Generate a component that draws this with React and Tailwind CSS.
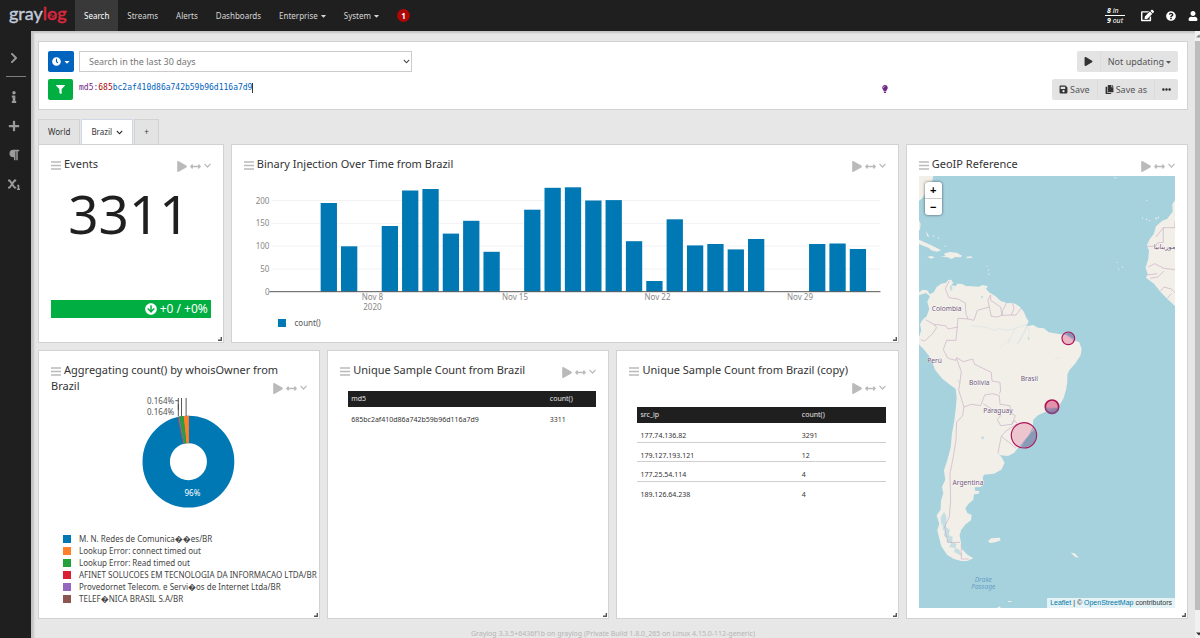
import React from "react";
import {
  FaClock, FaCaretDown, FaFilter, FaPlay, FaSave, FaCopy, FaEllipsisH, FaChevronRight, FaChevronDown,
  FaInfo, FaPlus, FaParagraph, FaSubscript, FaEdit, FaQuestionCircle, FaUser, FaArrowCircleDown,
  FaArrowsAltH, FaLightbulb,
} from "react-icons/fa";

const NAV = [
  { label: "Search", active: true },
  { label: "Streams" },
  { label: "Alerts" },
  { label: "Dashboards" },
  { label: "Enterprise", menu: true },
  { label: "System", menu: true },
];

function Logo() {
  return (
    <a href="#home" aria-label="Graylog" className="flex w-[75px] shrink-0 items-center pl-2">
      <svg viewBox="0 0 64 31" className="h-[31px] w-16" fontFamily="Lato, sans-serif" fontSize="18">
        <text x="1" y="20" fill="#c3cbdb" stroke="#c3cbdb" strokeWidth="0.4">
          gray<tspan fill="#e0273f" stroke="#e0273f">log</tspan>
        </text>
        <path d="M40 15.8h2.4l1-2 1.4 4 1-2.4h1.6" fill="none" stroke="#e0273f" strokeWidth="0.8" />
      </svg>
    </a>
  );
}

function Header() {
  return (
    <header className="flex h-[31px] shrink-0 items-stretch bg-[#1f1f1f] text-[8px] text-[#d6d6d6]">
      <Logo />
      <nav className="flex items-stretch">
        {NAV.map((n) => (
          <a
            key={n.label}
            href={"#" + n.label.toLowerCase()}
            className={"flex items-center gap-[3px] px-[9px] " + (n.active ? "bg-[#393939] text-white" : "")}
          >
            {n.label}
            {n.menu && <FaCaretDown className="h-2 w-[5px]" />}
          </a>
        ))}
      </nav>
      <a href="#notifications" className="flex items-center px-[9px]">
        <span className="flex size-[13px] items-center justify-center rounded-full bg-[#ad0707] font-bold text-white">1</span>
      </a>
      <div className="ml-auto flex items-center gap-3 pr-[2px] text-white">
        <a href="#throughput" className="mr-1 text-[7px] leading-[9px] italic">
          <span className="block border-b border-white px-[2px]"><b>8</b> in</span>
          <span className="block px-[2px]"><b>9</b> out</span>
        </a>
        <a href="#scratchpad" aria-label="Scratchpad"><FaEdit className="size-[13px]" /></a>
        <a href="#help" aria-label="Help"><FaQuestionCircle className="size-[10px]" /></a>
        <a href="#user" aria-label="User"><FaUser className="size-[10px]" /></a>
      </div>
    </header>
  );
}

function SideButton({ label, icon: Icon }) {
  return (
    <button aria-label={label} className="flex h-[29px] w-full items-center justify-center pr-[3px]">
      <Icon className="size-3" />
    </button>
  );
}

function Sidebar() {
  return (
    <aside className="flex w-[31px] shrink-0 flex-col items-center bg-[#1f1f1f] pt-3 text-[#9b9b9b]">
      <SideButton label="Expand" icon={FaChevronRight} />
      <hr className="mt-1 mb-[5px] w-5 border-[#7d7d7d]" />
      <SideButton label="Description" icon={FaInfo} />
      <SideButton label="Create" icon={FaPlus} />
      <SideButton label="Formatting" icon={FaParagraph} />
      <SideButton label="Fields" icon={FaSubscript} />
    </aside>
  );
}

function SearchBar() {
  return (
    <section className="grid grid-cols-[3fr_1fr] gap-y-[7px] border border-[#d2d2d2] bg-white px-[9px] py-[9px]">
      <div className="flex gap-[5px]">
        <button aria-label="Time range type" className="flex h-[21px] w-[26px] items-center justify-center gap-[2px] rounded-[2px] bg-[#0063be] text-white">
          <FaClock className="size-[9px]" />
          <FaCaretDown className="size-2" />
        </button>
        <div className="relative flex w-[333px] text-[#777]">
          <select aria-label="Time range" className="h-[21px] w-full appearance-none border border-[#ccc] bg-white px-[9px] text-[9px]">
            <option>Search in the last 30 days</option>
          </select>
          <FaChevronDown className="pointer-events-none absolute top-[7px] right-[2px] size-[7px] text-[#444]" />
        </div>
      </div>
      <div className="flex justify-end text-[9px] text-[#555]">
        <div className="flex h-[21px] rounded-[2px] bg-[#e3e3e3]">
          <button aria-label="Start updating" className="flex items-center border-r border-[#dcdcdc] px-[7px] text-[#333]"><FaPlay className="size-[9px]" /></button>
          <button className="flex items-center gap-[2px] px-[7px]">Not updating <FaCaretDown className="h-2 w-[5px]" /></button>
        </div>
      </div>
      <div className="flex gap-[6px]">
        <button aria-label="Perform search" className="flex h-[21px] w-[25px] shrink-0 items-center justify-center rounded-[2px] bg-[#00ae42] text-white">
          <FaFilter className="size-[9px]" />
        </button>
        <div className="relative flex-1 font-['DejaVu_Sans_Mono',monospace] text-[8px] leading-[17px]">
          <span aria-hidden="true" className="flex items-center text-[#0063be]">
            <span className="text-[#702785]">md5:</span>
            <span className="text-[#ad0707]">685</span>
            <span>bc2af410d86a742b59b96d116a7d9</span>
            <span className="h-[10px] w-px bg-[#333]" />
          </span>
          <input
            aria-label="Query"
            defaultValue="md5:685bc2af410d86a742b59b96d116a7d9"
            className="absolute inset-0 h-[17px] w-full bg-transparent text-transparent outline-none"
          />
        </div>
        <FaLightbulb className="mt-[6px] mr-[7px] size-2 text-[#702785]" />
      </div>
      <div className="flex justify-end text-[9px] text-[#555]">
        <div className="flex h-[21px] rounded-[2px] bg-[#e3e3e3]">
          <button className="flex items-center gap-[2px] border-r border-[#dcdcdc] px-[7px]"><FaSave className="size-[9px] text-[#333]" />Save</button>
          <button className="flex items-center gap-[2px] border-r border-[#dcdcdc] px-[7px]"><FaCopy className="size-[9px] text-[#333]" />Save as</button>
          <button aria-label="More actions" className="flex items-center px-[7px] text-[#333]"><FaEllipsisH className="size-[9px]" /></button>
        </div>
      </div>
    </section>
  );
}

function Tabs() {
  return (
    <div role="tablist" className="mt-[9px] flex gap-px text-[8px] text-[#333]">
      <button role="tab" aria-selected="false" className="h-[25px] border border-b-0 border-[#d2d2d2] bg-[#e3e3e3] px-[9px]">World</button>
      <button role="tab" aria-selected="true" className="flex h-[25px] items-center gap-1 border border-b-0 border-[#cfd9e6] bg-white px-[9px]">
        Brazil <FaChevronDown className="size-[7px] text-[#1f1f1f]" />
      </button>
      <button aria-label="Add page" className="h-[25px] border border-b-0 border-[#d2d2d2] bg-[#e3e3e3] px-[9px]">+</button>
    </div>
  );
}

function Widget({ title, className, children }) {
  return (
    <section className={"relative flex flex-col border border-[#d2d2d2] bg-white px-3 pt-[11px] " + className}>
      <header className="flow-root text-[11px] leading-4 text-[#bababa]">
        <svg viewBox="0 0 10 9" className="mr-[3px] inline h-[9px] w-[10px] align-middle" stroke="currentColor" strokeWidth="1.4">
          <path d="M0 1h10M0 4.5h10M0 8h10" />
        </svg>
        <h3 className="inline text-[#333]">{title}</h3>
        <span className="float-right flex h-4 items-end gap-[3px] pl-2">
          <button aria-label="Replay" className="flex"><FaPlay className="h-[11px] w-[10px]" /></button>
          <button aria-label="Stretch" className="flex"><FaArrowsAltH className="size-[11px]" /></button>
          <button aria-label="Widget menu" className="flex pb-1">
            <svg viewBox="0 0 7 5" className="h-[5px] w-[7px]" fill="none" stroke="currentColor" strokeWidth="1.2"><path d="M.5.8 3.5 4l3-3.2" /></svg>
          </button>
        </span>
      </header>
      {children}
      <svg viewBox="0 0 4 4" className="absolute right-[1px] bottom-[1px] size-1 text-[#555]" fill="none" stroke="currentColor" strokeWidth="1.4">
        <path d="M0 3.3h3.3V0" />
      </svg>
    </section>
  );
}

const BARS = [
  [0, 203], [1, 246.3], [3, 226], [4, 190.5], [5, 189], [6, 233.6], [7, 220.8], [8, 251.8], [10, 209.7],
  [11, 187.8], [12, 187.3], [13, 200.5], [14, 200.1], [15, 241.2], [16, 281], [17, 219.3], [18, 245.4],
  [19, 244], [20, 249.4], [21, 239], [24, 244], [25, 243.5], [26, 249],
];

function BarChart() {
  return (
    <svg viewBox="244 176 641 156" className="mt-1 h-[156px] w-full" fontFamily="Noto Sans, sans-serif" fontSize="8" fill="#888">
      {[[200, 200.5], [150, 223.3], [100, 246.1], [50, 269]].map(([v, y]) => (
        <g key={v}>
          <path d={`M271 ${y}H880`} stroke="#f2f2f2" />
          <text x="269" y={y + 3} textAnchor="end">{v}</text>
        </g>
      ))}
      <text x="269" y="295" textAnchor="end">0</text>
      {BARS.map(([i, y]) => (
        <rect key={i} x={320.2 + i * 20.35} y={y} width="16.3" height={291.7 - y} fill="#0078b3" />
      ))}
      <path d="M269 291.7H880" stroke="#555" />
      <g textAnchor="middle">
        <text x="372" y="300">Nov 8</text>
        <text x="372" y="310">2020</text>
        <text x="514.5" y="300">Nov 15</text>
        <text x="657" y="300">Nov 22</text>
        <text x="799.5" y="300">Nov 29</text>
      </g>
      <rect x="277.5" y="319" width="8" height="8" fill="#0078b3" />
      <text x="294" y="326" fill="#555">count()</text>
    </svg>
  );
}

const OWNERS = [
  ["bg-[#0078b3]", "M. N. Redes de Comunica\uFFFD\uFFFDes/BR"],
  ["bg-[#ff7f2a]", "Lookup Error: connect timed out"],
  ["bg-[#26a03a]", "Lookup Error: Read timed out"],
  ["bg-[#dc1e34]", "AFINET SOLUCOES EM TECNOLOGIA DA INFORMACAO LTDA/BR"],
  ["bg-[#9467bd]", "Provedornet Telecom. e Servi\uFFFDos de Internet Ltda/BR"],
  ["bg-[#8c5650]", "TELEF\uFFFDNICA BRASIL S.A/BR"],
];

function Donut() {
  return (
    <>
      <svg viewBox="51 396 256 116" className="mt-[2px] h-[116px] w-full" fontFamily="Noto Sans, sans-serif" fontSize="8">
        <circle cx="188.3" cy="461.7" r="32.2" fill="none" stroke="#0078b3" strokeWidth="27.4" />
        <path d="M188.8 415.7v27.5h-2.6l-3-27.2z" fill="#ff7f2a" />
        <path d="M183.4 416l2.8 27.2-2.2.2-4.6-27z" fill="#26a03a" />
        <path d="M179.4 416.4l4.6 27-.8.2-5.2-26.9z" fill="#8f6f9c" />
        <path d="M178 416.7l5.2 26.9-.6.1-5.4-26.8z" fill="#8c5650" />
        <path d="M178.2 398v18M181.4 398v18M186 398v18M178.2 400.7h-3M178.2 404v6" fill="none" stroke="#444" strokeWidth="0.9" />
        <g fill="#555" textAnchor="end">
          <text x="174" y="404">0.164%</text>
          <text x="174" y="415">0.164%</text>
        </g>
        <text x="192.3" y="496" textAnchor="middle" fill="#fff">96%</text>
      </svg>
      <ul className="mt-[21px] pl-3 text-[8px] leading-[12px] whitespace-nowrap text-[#444]">
        {OWNERS.map(([c, t]) => (
          <li key={t} className="flex items-center gap-2"><i className={"size-2 shrink-0 " + c} />{t}</li>
        ))}
      </ul>
    </>
  );
}

function DataTable({ head, rows, first }) {
  return (
    <table className="mt-[13px] ml-2 table-fixed border-collapse text-left text-[7px] text-[#333]">
      <thead className="bg-[#1f1f1f] text-[#e3e3e3]">
        <tr className="h-4">
          <th className={"px-[3px] font-normal " + first}>{head[0]}</th>
          <th className="px-[3px] font-normal">{head[1]}</th>
        </tr>
      </thead>
      <tbody>
        {rows.map((r) => (
          <tr key={r[0]} className="h-[19px] border-b border-[#cfcfcf] last:border-b-0">
            <td className="px-[3px] pt-2">{r[0]}</td>
            <td className="px-[3px] pt-2">{r[1]}</td>
          </tr>
        ))}
      </tbody>
    </table>
  );
}

function Map() {
  return (
    <div className="relative mt-1 mb-[10px] min-h-0 flex-1 overflow-hidden bg-[#a6d2de]">
      <svg viewBox="55 107 769 1296" preserveAspectRatio="xMidYMid slice" className="block h-full w-full">
        <g fill="#f2efe9">
          <path d="M55 456L66 448 80 450 88 462 100 455 108 440 122 430 135 428 144 419 152 418 158 428 152 434 165 438 170 430 185 431 196 437 212 438 235 439 246 434 262 438 256 445 265 456 285 468 300 482 318 488 340 489 358 499 370 515 377 532 384 543 378 558 398 554 412 562 430 564 444 576 470 580 496 584 516 598 536 606 543 626 540 645 525 668 506 690 500 704 500 725 496 750 488 775 472 802 440 812 412 825 398 838 396 860 384 885 364 908 340 938 322 947 300 945 292 938 304 952 312 968 302 988 280 1000 250 1003 246 1012 250 1030 240 1040 222 1041 224 1052 236 1052 234 1060 220 1062 218 1078 204 1090 194 1104 200 1118 213 1124 211 1140 195 1152 182 1168 177 1185 181 1207 184 1226 200 1243 218 1254 200 1262 182 1262 160 1256 140 1244 122 1218 116 1194 110 1170 116 1150 108 1125 120 1108 121 1082 128 1058 124 1040 134 1018 130 990 140 960 150 922 154 880 161 842 166 800 168 770 165 745 150 735 126 716 104 690 94 664 84 645 68 625 55 612 55 590 62 570 58 552 66 538 78 528 86 506 80 484 88 468 76 458 55 465Z" />
          <path d="M824 178L815 192 816 214 800 235 785 241 766 258 760 280 748 295 738 316 745 330 743 355 735 382 741 400 736 412 760 430 780 455 798 474 824 498Z" />
          <path d="M55 107H98L93 130 80 150 66 172 55 182ZM55 240L60 250 58 268 55 270ZM55 298L75 307 96 317 122 330 108 334 92 330 84 322 68 316 55 311Z" />
          <path d="M120 349L134 347 130 340 146 335 168 337 184 346 180 351 164 350 152 356 142 351ZM80 350L92 347 102 351 92 355ZM197 349L212 348 216 352 199 354Z" />
          <path d="M262 1202L272 1194 298 1192 300 1200 284 1206 268 1208ZM510 1237L522 1239 535 1252 524 1250ZM288 1403L298 1398 300 1403ZM322 1382h10v3h-10z" />
          <path d="M76 272l6 10 4 8-6-2zM96 285l6 2-3 3zM112 290l5 4-4 2zM132 315l4 3-4 2zM257 374l4 2-2 4zM262 385l3 4-3 3zM264 398l3 4-4 3zM724 230l4 3-4 2zM736 234l5 3-5 3zM746 238l5 3-5 2zM762 236l6-5 1 6zM770 234l5-6v6zM736 178l6 2-4 2zM648 364l3 3-4 1zM664 376l4 5-4 1zM652 384l5 3-5 1zM640 110l10 3-8 1z" />
        </g>
        <g fill="#a6d2de">
          <path d="M148 437l5-3 3 10-4 8-4-4zM240 468l6-2 2 4-5 5zM170 718l4 2 6 10-4-2zM240 891l8-3 4 5-6 5zM380 590l5 1 2 8-4 0zM120 1132l3 24 4-6-1 22 7-8-3 22 10 8-2 12 14 2-6 12 18 4-4 10 24 14-8-20-12-6 4-12-14-4 2-16-12-6 4-16-12-8 2-30-8-16z" opacity="0.6" />
          <path d="M384 546L350 612l24-38 6-22-12 4-30 10-24 4-20-6-10 6-34-10-40-4" fill="none" stroke="#a6d2de" strokeWidth="1.3" opacity="0.6" />
          <path d="M322 610l20-44M300 622l30-30M462 656l20-6M384 560l2 30" fill="none" stroke="#a6d2de" strokeWidth="1" opacity="0.6" />
        </g>
        <g fill="none" stroke="#c3a3c0" strokeWidth="1.7">
          <path d="M146 422L134 445 145 472 172 476 194 488 196 520 202 536 220 540 230 510 266 500 262 478 270 464M270 464L270 480 300 500 304 525 290 530 272 528 266 500M318 488L306 510 304 525 332 524 340 505 336 489M362 503L346 524 332 524M202 536L172 534 170 560 166 600 138 600 128 628 142 654 165 660 168 652 188 664 216 656 222 672 272 696 274 722 298 726 300 752 296 760" />
          <path d="M75 538L100 552 135 556 142 566 172 560M60 598L72 602 96 580 108 562 100 552M168 655L182 694 176 740 174 748 190 800 212 792 240 796 252 764 276 760 296 766 298 792 328 796 330 818 344 826 334 852 300 856 290 838 300 826 264 800 248 790M334 852L342 840 350 850 316 872 302 888 292 938M302 888L330 910 346 924" />
          <path d="M190 800L186 826 168 846 166 900 158 950 148 1000 150 1080 146 1130 132 1160 138 1190 142 1206 178 1206M182 1212V1256H204" />
          <path d="M824 240L822 262H788V306L770 308 766 318H738M788 262L766 290M743 380L762 370 790 384 824 388M738 404L770 400M748 414L772 410 790 392M780 452L790 440 812 446 824 458M800 474L812 460" />
        </g>
        <g fontFamily="Noto Sans, sans-serif" fontSize="20" fill="#6d5273" stroke="#fff" strokeWidth="2" paintOrder="stroke" textAnchor="middle">
          <text x="138" y="512">Colombia</text>
          <text x="102" y="668">Perú</text>
          <text x="386" y="722">Brasil</text>
          <text x="236" y="735">Bolivia</text>
          <text x="292" y="817">Paraguay</text>
          <text x="202" y="1033">Argentina</text>
          <text x="792" y="326" fontFamily="DejaVu Sans, sans-serif">موريتانيا</text>
        </g>
        <g fontFamily="Noto Sans, sans-serif" fontSize="20" fontStyle="italic" fill="#6a9fc4" textAnchor="middle">
          <text x="248" y="1324">Drake</text>
          <text x="248" y="1346">Passage</text>
        </g>
        <g stroke="#ad1457" fill="#d6336c">
          <circle cx="503" cy="594" r="19" strokeWidth="3.5" fillOpacity="0.3" />
          <circle cx="454" cy="799" r="20" strokeWidth="5" fillOpacity="0.5" />
          <circle cx="370" cy="885" r="38" strokeWidth="3.5" fillOpacity="0.22" />
        </g>
        <path d="M497 582l24 14a19 19 0 0 0-18-20zM434 802h40a20 20 0 0 1-40 0zM404 870l-10 4-18 22-14 24a38 38 0 0 0 46-36z" fill="#5c7fa8" opacity="0.45" />
      </svg>
      <div className="absolute top-[6px] left-[6px] flex w-[17px] flex-col rounded-[3px] bg-white text-center font-['Liberation_Sans',sans-serif] text-[11px] leading-4 font-bold text-black shadow-[0_0_3px_rgba(0,0,0,0.6)]">
        <button aria-label="Zoom in" className="border-b border-[#ccc]">+</button>
        <button aria-label="Zoom out">−</button>
      </div>
      <p className="absolute right-0 bottom-0 bg-white/70 px-[3px] font-['Liberation_Sans',sans-serif] text-[7px] leading-[10px] text-[#333]">
        <a href="#leaflet" className="text-[#0078a8]">Leaflet</a> | © <a href="#osm" className="text-[#0078a8]">OpenStreetMap</a> contributors
      </p>
    </div>
  );
}

function Scrollbar() {
  return (
    <div aria-hidden="true" className="flex w-[5px] shrink-0 flex-col bg-[#f1f1f1]">
      <svg viewBox="0 0 5 10" className="h-[10px] w-[5px]"><path d="M1 6.5 4 3.5l1 1v2z" fill="#888" /></svg>
      <div className="mb-[18px] flex-1 bg-[#bdbdbd]" />
      <svg viewBox="0 0 5 10" className="h-[10px] w-[5px]"><path d="M1 4.5h4v2l-1 1z" fill="#333" /></svg>
    </div>
  );
}

export default function App() {
  return (
    <div className="flex h-screen flex-col overflow-hidden bg-[#e7e7e7] font-['Noto_Sans','Noto_Sans_CJK_JP',sans-serif]">
      <Header />
      <div className="flex min-h-0 flex-1">
        <Sidebar />
        <main className="min-w-0 flex-1 overflow-hidden px-[7px] pt-[10px] shadow-[inset_3px_2px_2px_#c4c4c4]">
          <SearchBar />
          <Tabs />
          <div className="grid grid-cols-12 grid-rows-[199px_269px] gap-[7px]">
            <Widget title="Events" className="col-span-2">
              <p className="mt-[6px] pr-1 text-center text-[53px] leading-[72px] text-[#1f1f1f]">3311</p>
              <p className="mt-auto mb-6 flex h-[18px] items-center justify-end gap-[3px] bg-[#00ae42] pr-[3px] text-[12px] text-white">
                <FaArrowCircleDown className="size-3" /> +0 / +0%
              </p>
            </Widget>
            <Widget title="Binary Injection Over Time from Brazil" className="col-span-7">
              <BarChart />
            </Widget>
            <Widget title="GeoIP Reference" className="col-span-3 row-span-2">
              <Map />
            </Widget>
            <div className="col-span-9 grid grid-cols-3 gap-[7px]">
              <Widget title="Aggregating count() by whoisOwner from Brazil" className="">
                <Donut />
              </Widget>
              <Widget title="Unique Sample Count from Brazil" className="">
                <DataTable head={["md5", "count()"]} rows={[["685bc2af410d86a742b59b96d116a7d9", "3311"]]} first="w-4/5" />
              </Widget>
              <Widget title="Unique Sample Count from Brazil (copy)" className="">
                <DataTable
                  head={["src_ip", "count()"]}
                  rows={[["177.74.136.82", "3291"], ["179.127.193.121", "12"], ["177.25.54.114", "4"], ["189.126.64.238", "4"]]}
                  first="w-[65%]"
                />
              </Widget>
            </div>
          </div>
          <footer className="mt-[9px] text-center text-[7px] leading-[12px] text-[#b5b5b5]">
            Graylog 3.3.5+6436f1b on graylog (Private Build 1.8.0_265 on Linux 4.15.0-112-generic)
          </footer>
        </main>
        <Scrollbar />
      </div>
    </div>
  );
}
